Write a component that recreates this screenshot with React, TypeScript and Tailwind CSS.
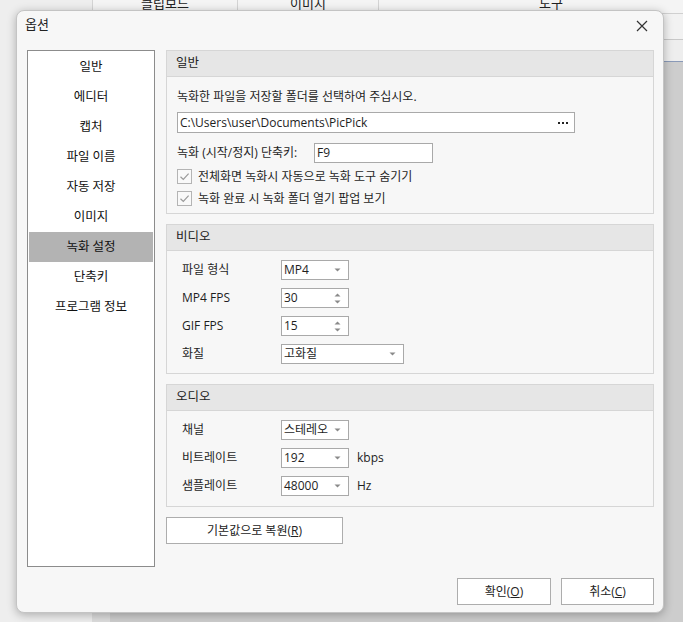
import type { ReactNode } from "react";

const font = { fontFamily: '"Open Sans", "Noto Sans CJK KR", sans-serif' };

const menu = ["일반", "에디터", "캡처", "파일 이름", "자동 저장", "이미지", "녹화 설정", "단축키", "프로그램 정보"];

function Section({ title, children, className }: { title: string; children: ReactNode; className?: string }) {
  return (
    <div className={`border border-[#d6d6d6] ${className ?? ""}`}>
      <div className="flex h-[26px] items-center border-b border-[#d6d6d6] bg-[#e6e6e6] px-[9px] text-[12.5px] text-[#222]">
        {title}
      </div>
      {children}
    </div>
  );
}

function Check({ label }: { label: string }) {
  return (
    <div className="flex h-[15px] items-center gap-[6px]">
      <span className="flex h-[15px] w-[15px] items-center justify-center border border-[#b4b4b4] bg-[#f9f9f9]">
        <svg width="11" height="11" viewBox="0 0 11 11" fill="none">
          <path d="M1.5 5.8 L4.3 8.4 L9.6 2.6" stroke="#9a9a9a" strokeWidth="1.2" />
        </svg>
      </span>
      <span>{label}</span>
    </div>
  );
}

function Arrow() {
  return (
    <svg width="7" height="4" viewBox="0 0 7 4">
      <path d="M0.5 0.5 H6.5 L3.5 3.5 Z" fill="#8a8a8a" />
    </svg>
  );
}

function Select({ value, wide }: { value: string; wide?: boolean }) {
  return (
    <div
      className={`flex h-[20px] items-center justify-between border border-[#a9a9a9] bg-white pl-[2px] pr-[7px] ${
        wide ? "w-[123px]" : "w-[68px]"
      }`}
    >
      <span>{value}</span>
      <Arrow />
    </div>
  );
}

function Spin({ value }: { value: string }) {
  return (
    <div className="flex h-[20px] w-[68px] items-center justify-between border border-[#a9a9a9] bg-white pl-[2px] pr-[7px]">
      <span>{value}</span>
      <span className="flex flex-col gap-[3px]">
        <svg width="7" height="4" viewBox="0 0 7 4">
          <path d="M0.5 3.5 H6.5 L3.5 0.5 Z" fill="#8a8a8a" />
        </svg>
        <Arrow />
      </span>
    </div>
  );
}

function Row({ label, children }: { label: string; children: ReactNode }) {
  return (
    <div className="flex h-[20px] items-center">
      <span className="w-[104px] pl-[5px]">{label}</span>
      {children}
    </div>
  );
}

function Button({ children, className }: { children: ReactNode; className?: string }) {
  return (
    <div
      className={`flex h-[27px] items-center justify-center border border-[#adadad] bg-white text-[12px] text-[#222] ${className ?? ""}`}
    >
      {children}
    </div>
  );
}

function Backdrop() {
  return (
    <div className="absolute inset-0 flex">
      <div className="w-[92px] shrink-0 bg-[#eeeeee]" />
      <div className="flex min-w-0 flex-1 flex-col overflow-hidden">
        <div className="flex h-[14px] shrink-0 overflow-hidden border-b border-[#d0d0d0] bg-[#f4f4f4] text-[13px] text-[#222]">
          <div className="-mt-[9px] w-[146px] shrink-0 border-x border-[#d4d4d4] text-center leading-[24px]">클립보드</div>
          <div className="-mt-[9px] w-[141px] shrink-0 border-r border-[#d4d4d4] text-center leading-[24px]">이미지</div>
          <div className="-mt-[9px] w-[344px] shrink-0 text-center leading-[24px]">도구</div>
        </div>
        <div className="h-[26px] border-b border-[#c8c8c8] bg-[#f2f2f2]" />
        <div className="h-[22px] border-b border-[#8a9ab8] bg-[#eeeeee]" />
        <div className="flex flex-1">
          <div className="w-[18px] bg-[#dcdcdc]" />
          <div className="flex-1 bg-[#cdcdcd]" />
        </div>
      </div>
    </div>
  );
}

export default function App() {
  return (
    <div className="relative h-[622px] w-[683px] overflow-hidden bg-[#eeeeee] text-[12px] text-[#1e1e1e]" style={font}>
      <Backdrop />
      <div className="absolute left-[16px] top-[10px] flex h-[603px] w-[648px] flex-col rounded-[8px] border border-[#c4c4c4] bg-[#f7f7f7] shadow-[0_2px_10px_rgba(0,0,0,0.28)]">
        <div className="flex h-[39px] items-start justify-between pl-[8px] pr-[15px] pt-[3px]">
          <span className="text-[13px] leading-[20px] text-[#222]">옵션</span>
          <svg className="mt-[6px]" width="12" height="12" viewBox="0 0 12 12">
            <path d="M1 1 L11 11 M11 1 L1 11" stroke="#333" strokeWidth="1.2" />
          </svg>
        </div>
        <div className="flex gap-[11px] pl-[10px] pr-[9px]">
          <div className="flex h-[517px] w-[128px] flex-col border border-[#8c8c8c] bg-white px-[1px] pt-[1px]">
            {menu.map((item) => (
              <div
                key={item}
                className={`flex h-[30px] items-center justify-center text-[12.5px] text-[#111] ${
                  item === "녹화 설정" ? "bg-[#b3b3b3]" : ""
                }`}
              >
                {item}
              </div>
            ))}
          </div>

          <div className="flex flex-1 flex-col">
            <Section title="일반" className="h-[164px]">
              <div className="flex flex-col px-[10px] pt-[10px]">
                <div className="h-[20px] leading-[20px]">녹화한 파일을 저장할 폴더를 선택하여 주십시오.</div>
                <div className="mt-[5px] flex h-[21px] w-[398px] items-center justify-between border border-[#a9a9a9] bg-white pl-[2px] pr-[6px]">
                  <span>C:\Users\user\Documents\PicPick</span>
                  <span className="flex gap-[2px]">
                    <span className="h-[2px] w-[2px] bg-[#222]" />
                    <span className="h-[2px] w-[2px] bg-[#222]" />
                    <span className="h-[2px] w-[2px] bg-[#222]" />
                  </span>
                </div>
                <div className="mt-[10px] flex h-[20px] items-center">
                  <span className="w-[137px]">녹화 (시작/정지) 단축키:</span>
                  <div className="flex h-[20px] w-[119px] items-center border border-[#a9a9a9] bg-white pl-[2px]">F9</div>
                </div>
                <div className="mt-[6px] flex flex-col gap-[7px]">
                  <Check label="전체화면 녹화시 자동으로 녹화 도구 숨기기" />
                  <Check label="녹화 완료 시 녹화 폴더 열기 팝업 보기" />
                </div>
              </div>
            </Section>

            <Section title="비디오" className="mt-[10px] h-[150px]">
              <div className="flex flex-col gap-[8px] px-[10px] pt-[9px]">
                <Row label="파일 형식">
                  <Select value="MP4" />
                </Row>
                <Row label="MP4 FPS">
                  <Spin value="30" />
                </Row>
                <Row label="GIF FPS">
                  <Spin value="15" />
                </Row>
                <Row label="화질">
                  <Select value="고화질" wide />
                </Row>
              </div>
            </Section>

            <Section title="오디오" className="mt-[10px] h-[123px]">
              <div className="flex flex-col gap-[8px] px-[10px] pt-[9px]">
                <Row label="채널">
                  <Select value="스테레오" />
                </Row>
                <Row label="비트레이트">
                  <Select value="192" />
                  <span className="ml-[8px]">kbps</span>
                </Row>
                <Row label="샘플레이트">
                  <Select value="48000" />
                  <span className="ml-[8px]">Hz</span>
                </Row>
              </div>
            </Section>

            <Button className="mt-[10px] w-[177px]">
              기본값으로 복원(<span className="underline">R</span>)
            </Button>
          </div>
        </div>
        <div className="mt-auto flex justify-end gap-[10px] pb-[7px] pr-[9px]">
          <Button className="w-[94px]">
            확인(<span className="underline">O</span>)
          </Button>
          <Button className="w-[93px]">
            취소(<span className="underline">C</span>)
          </Button>
        </div>
      </div>
    </div>
  );
}
